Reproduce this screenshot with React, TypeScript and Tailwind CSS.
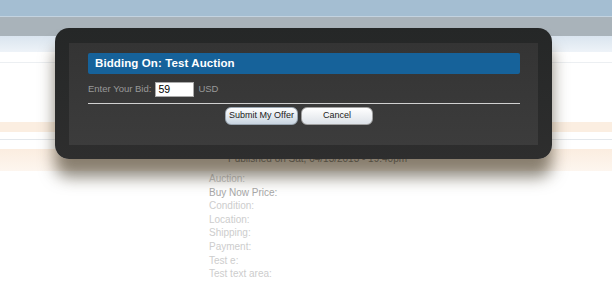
const labels = [
  { text: "Auction:", tone: "text-[#c4c4c4]" },
  { text: "Buy Now Price:", tone: "text-[#a8a8a8]" },
  { text: "Condition:", tone: "text-[#cdcdcd]" },
  { text: "Location:", tone: "text-[#cdcdcd]" },
  { text: "Shipping:", tone: "text-[#cdcdcd]" },
  { text: "Payment:", tone: "text-[#cdcdcd]" },
  { text: "Test e:", tone: "text-[#cdcdcd]" },
  { text: "Test text area:", tone: "text-[#cdcdcd]" },
];

function PageBehind() {
  return (
    <div className="flex h-full flex-col">
      <div className="h-[16px] bg-[#a4bed2]" />
      <div className="h-px bg-[#c3d3e0]" />
      <div className="h-[19px] bg-[#a9b3ba]" />
      <div className="h-[16px] bg-gradient-to-b from-[#dae5ef] to-[#eef3f8]" />
      <div className="h-[10px]" />
      <div className="h-px bg-[#eceff2]" />
      <div className="h-[59px]" />
      <div className="h-[10px] bg-[#fbeee1]" />
      <div className="h-[7px]" />
      <div className="h-px bg-[#e3e7eb]" />
      <div className="h-[9px]" />
      <div className="h-[22px] bg-gradient-to-b from-[#fbede0] to-[#fdf6ef]">
        <p className="pl-[228px] pt-[4px] text-[10px] leading-[12px] text-[#777]">
          Published on Sat, 04/13/2013 - 19:40pm
        </p>
      </div>
      <div className="flex flex-col pl-[209px] pt-[1px]">
        {labels.map((label) => (
          <p key={label.text} className={`text-[10px] leading-[13.6px] ${label.tone}`}>
            {label.text}
          </p>
        ))}
      </div>
    </div>
  );
}

function BidDialog() {
  return (
    <div className="absolute left-[55px] top-[28px] h-[131px] w-[497px] rounded-[14px] bg-gradient-to-b from-[#252727] to-[#2e2e2e] pb-[14px] pl-[14px] pr-[14px] pt-[15px] shadow-[0_18px_16px_rgba(60,50,30,0.6)]">
      <div className="h-full bg-gradient-to-b from-[#343434] to-[#3c3c3c] pl-[19px] pr-[18px] pt-[10px]">
        <div className="flex h-[21px] items-center rounded-[2px] bg-[#16629a] pl-[7px]">
          <span className="text-[11.5px] font-bold tracking-[0.1px] text-white">Bidding On: Test Auction</span>
        </div>
        <div className="mt-[8px] flex h-[15px] items-center text-[9.5px] text-[#999]">
          <span>Enter Your Bid:</span>
          <input
            defaultValue="59"
            className="ml-[4px] h-[15px] w-[39px] border border-[#aaa] bg-white px-[2px] text-[10.5px] text-black outline-none"
          />
          <span className="ml-[4px]">USD</span>
        </div>
        <div className="mt-[6px] h-px bg-[#d0d0d0]" />
        <div className="mt-[3px] flex justify-center gap-[3px] pr-[10px]">
          <button className="h-[18px] w-[73px] rounded-[6px] border border-[#9aa6b1] bg-gradient-to-b from-white to-[#c9d5e1] text-[9px] text-[#222]">
            Submit My Offer
          </button>
          <button className="h-[18px] w-[72px] rounded-[6px] border border-[#a0a0a0] bg-gradient-to-b from-white to-[#dde2e8] text-[9px] text-[#222]">
            Cancel
          </button>
        </div>
      </div>
    </div>
  );
}

export default function App() {
  return (
    <div className="relative h-[300px] w-[612px] overflow-hidden bg-white font-['Liberation_Sans',Arial,sans-serif]">
      <PageBehind />
      <BidDialog />
    </div>
  );
}
